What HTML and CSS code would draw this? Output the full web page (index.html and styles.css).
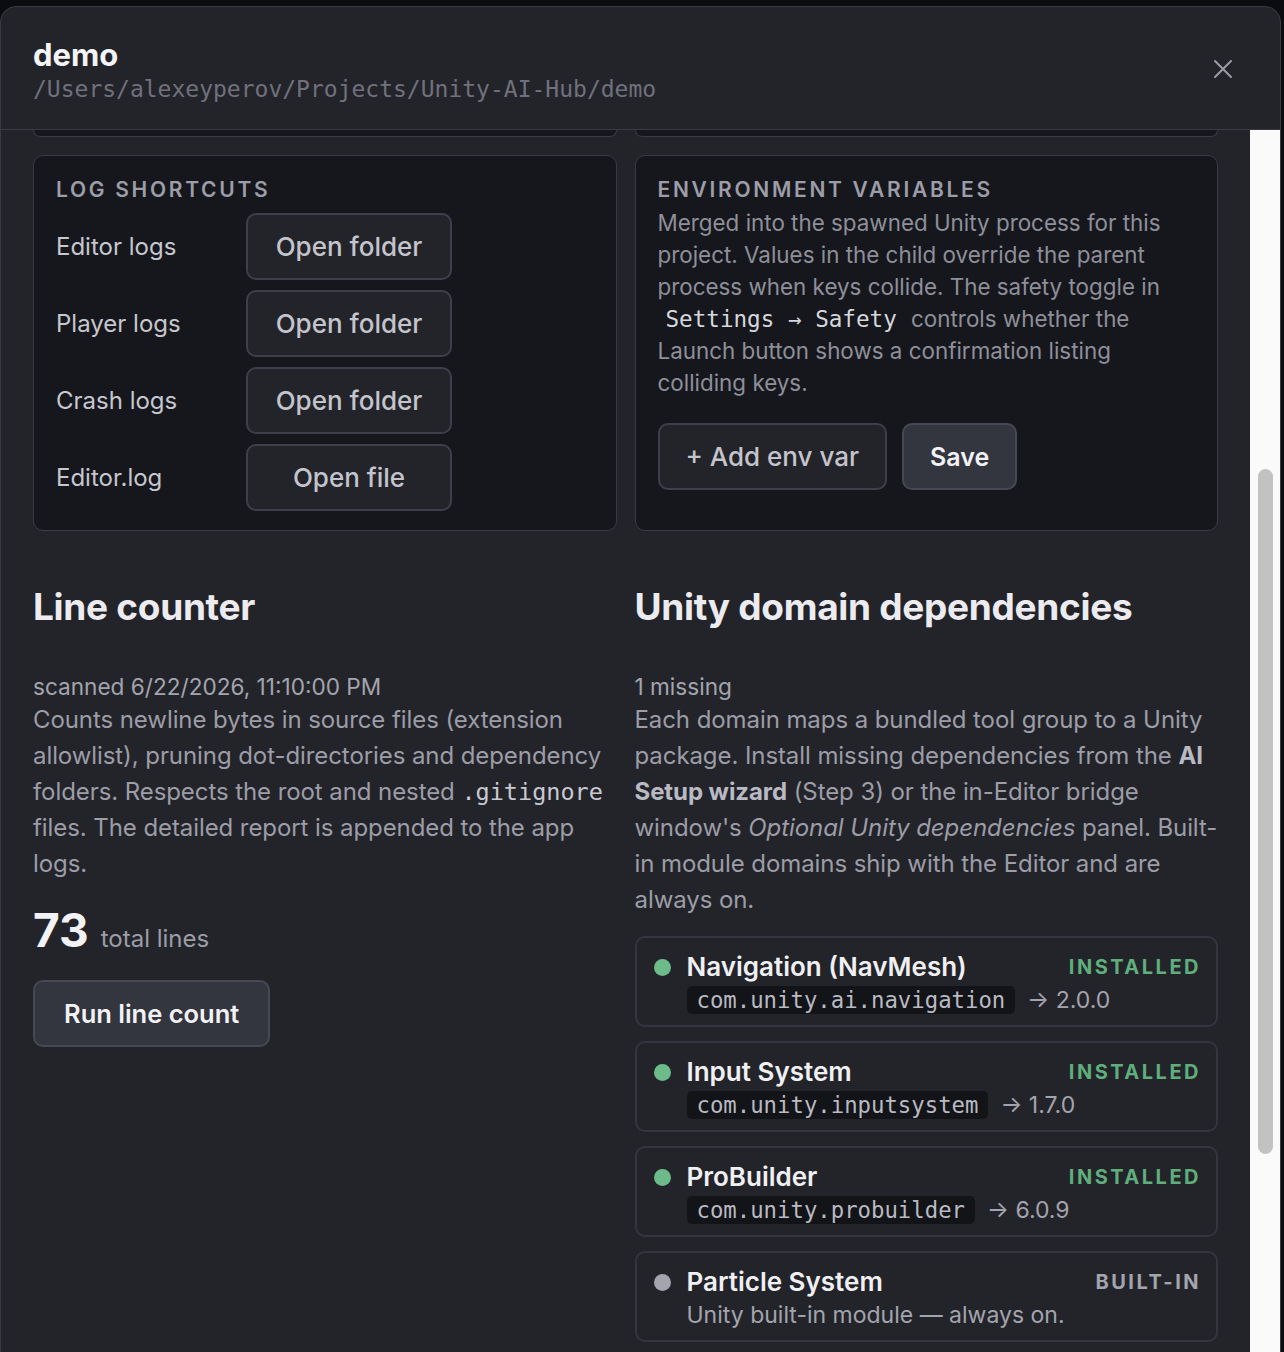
FILE: index.html
```html
<!DOCTYPE html>
<html lang="en">
<head>
    <meta charset="UTF-8">
    <meta name="viewport" content="width=device-width, initial-scale=1.0">
    <title>demo</title>
    <link rel="stylesheet" href="styles.css">
</head>
<body>

<div class="modal">
    <header class="modal-header">
        <div class="title-block">
            <h1>demo</h1>
            <div class="path">/Users/alexeyperov/Projects/Unity-AI-Hub/demo</div>
        </div>
        <button class="close" aria-label="Close">
            <svg width="20" height="20" viewBox="0 0 20 20" fill="none" stroke="currentColor" stroke-width="2" stroke-linecap="round">
                <path d="M2 2 L18 18 M18 2 L2 18"/>
            </svg>
        </button>
    </header>

    <div class="modal-body">
        <div class="content">
            <div class="grid stubs">
                <div class="card stub"></div>
                <div class="card stub"></div>
            </div>

            <div class="grid">
                <div class="card">
                    <div class="card-title">Log shortcuts</div>
                    <div class="log-row">
                        <span class="log-label">Editor logs</span>
                        <button class="btn">Open folder</button>
                    </div>
                    <div class="log-row">
                        <span class="log-label">Player logs</span>
                        <button class="btn">Open folder</button>
                    </div>
                    <div class="log-row">
                        <span class="log-label">Crash logs</span>
                        <button class="btn">Open folder</button>
                    </div>
                    <div class="log-row">
                        <span class="log-label">Editor.log</span>
                        <button class="btn">Open file</button>
                    </div>
                </div>

                <div class="card">
                    <div class="card-title">Environment variables</div>
                    <p class="card-text">Merged into the spawned Unity process for this project. Values in the child override the parent process when keys collide. The safety toggle in <code class="kbd">Settings → Safety</code> controls whether the Launch button shows a confirmation listing colliding keys.</p>
                    <div class="btn-row">
                        <button class="btn btn-sm">+ Add env var</button>
                        <button class="btn btn-sm btn-primary">Save</button>
                    </div>
                </div>
            </div>

            <div class="grid sections">
                <section>
                    <h2>Line counter</h2>
                    <div class="meta">scanned 6/22/2026, 11:10:00 PM</div>
                    <p class="desc">Counts newline bytes in source files (extension allowlist), pruning dot-directories and dependency folders. Respects the root and nested <code>.gitignore</code> files. The detailed report is appended to the app logs.</p>
                    <div class="total"><span class="total-num">73</span><span class="total-label">total lines</span></div>
                    <button class="btn btn-primary btn-run">Run line count</button>
                </section>

                <section>
                    <h2>Unity domain dependencies</h2>
                    <div class="meta">1 missing</div>
                    <p class="desc">Each domain maps a bundled tool group to a Unity package. Install missing dependencies from the <strong>AI Setup wizard</strong> (Step 3) or the in-Editor bridge window's <em>Optional Unity dependencies</em> panel. Built-in module domains ship with the Editor and are always on.</p>

                    <div class="deps">
                        <div class="dep">
                            <div class="dep-head">
                                <span class="dot ok"></span>
                                <span class="dep-name">Navigation (NavMesh)</span>
                                <span class="status ok">Installed</span>
                            </div>
                            <div class="dep-pkg"><code class="chip">com.unity.ai.navigation</code><span class="ver">→ 2.0.0</span></div>
                        </div>
                        <div class="dep">
                            <div class="dep-head">
                                <span class="dot ok"></span>
                                <span class="dep-name">Input System</span>
                                <span class="status ok">Installed</span>
                            </div>
                            <div class="dep-pkg"><code class="chip">com.unity.inputsystem</code><span class="ver">→ 1.7.0</span></div>
                        </div>
                        <div class="dep">
                            <div class="dep-head">
                                <span class="dot ok"></span>
                                <span class="dep-name">ProBuilder</span>
                                <span class="status ok">Installed</span>
                            </div>
                            <div class="dep-pkg"><code class="chip">com.unity.probuilder</code><span class="ver">→ 6.0.9</span></div>
                        </div>
                        <div class="dep">
                            <div class="dep-head">
                                <span class="dot builtin"></span>
                                <span class="dep-name">Particle System</span>
                                <span class="status builtin">Built-in</span>
                            </div>
                            <div class="dep-pkg"><span class="ver">Unity built-in module — always on.</span></div>
                        </div>
                    </div>
                </section>
            </div>
        </div>

        <div class="scrollbar">
            <div class="thumb"></div>
        </div>
    </div>
</div>

</body>
</html>
```

FILE: styles.css
```css
 html, body {
     height: 100%;
 }

 body {
     margin: 0;
     padding: 6px 3px 0 0;
     box-sizing: border-box;
     background-color: #0b0c0f;
     font-family: 'Inter', 'Noto Sans', sans-serif;
     color: #ececf0;
     overflow: hidden;
 }

 .modal {
     height: 1400px;
     display: flex;
     flex-direction: column;
     background-color: #23242a;
     border: 1px solid #3a3b45;
     border-radius: 16px 16px 0 0;
     overflow: hidden;
 }

 .modal-header {
     display: flex;
     justify-content: space-between;
     align-items: center;
     padding: 29px 47px 25px 32px;
     border-bottom: 1px solid #3a3b45;
 }

 .modal-header h1 {
     margin: 0;
     font-size: 31px;
     line-height: 38px;
     font-weight: 700;
     color: #f4f4f6;
 }

 .path {
     font-family: 'DejaVu Sans Mono', monospace;
     font-size: 23px;
     line-height: 30px;
     color: #70717c;
 }

 .close {
     background: none;
     border: none;
     padding: 0;
     color: #9a9ba5;
     cursor: pointer;
     display: flex;
     margin-bottom: 3px;
 }

 .modal-body {
     flex: 1;
     display: flex;
 }

 .content {
     flex: 1;
     padding: 0 32px;
 }

 .scrollbar {
     width: 30px;
     background-color: #fafafa;
     display: flex;
     justify-content: center;
 }

 .thumb {
     width: 15px;
     height: 685px;
     margin-top: 339px;
     border-radius: 8px;
     background-color: #c2c2c2;
 }

 .grid {
     display: grid;
     grid-template-columns: 1fr 1fr;
     gap: 18px;
 }

 .stubs {
     margin-bottom: 18px;
 }

 .card {
     background-color: #16171c;
     border: 1px solid #3a3b45;
     border-radius: 10px;
     padding: 21px 22px 19px;
 }

 .card.stub {
     height: 6px;
     padding: 0;
     border-top: none;
     border-radius: 0 0 10px 10px;
 }

 .card-title {
     font-size: 21px;
     line-height: 26px;
     font-weight: 600;
     letter-spacing: 2.7px;
     text-transform: uppercase;
     color: #9c9da8;
     margin-bottom: 10px;
 }

 .card-title + .card-text {
     margin-top: -6px;
 }

 .log-row {
     display: flex;
     align-items: center;
     margin-bottom: 10px;
 }

 .log-row:last-child {
     margin-bottom: 0;
 }

 .log-label {
     width: 190px;
     font-size: 24px;
     color: #c6c7cf;
 }

 .btn {
     font-family: 'Inter', 'Noto Sans', sans-serif;
     background-color: #23242a;
     color: #c3c4cc;
     border: 2px solid #3e3f4a;
     border-radius: 10px;
     font-size: 26px;
     font-weight: 500;
     height: 67px;
     width: 206px;
     cursor: pointer;
 }

 .btn-sm {
     width: auto;
     height: 67px;
     padding: 0 26px;
     font-size: 26px;
 }

 .btn-primary {
     background-color: #33353f;
     border-color: #474853;
     color: #f2f2f5;
     font-weight: 600;
 }

 .btn-sm.btn-primary {
     font-size: 25px;
 }

 .card-text {
     margin: 0 0 24px;
     font-size: 22.4px;
     line-height: 32px;
     color: #8e8f9a;
 }

 .kbd {
     font-family: 'DejaVu Sans Mono', monospace;
     font-size: 22.6px;
     color: #d6d7de;
     padding: 0 8px;
 }

 .btn-row {
     display: flex;
     gap: 15px;
 }

 .sections {
     margin-top: 53px;
 }

 h2 {
     margin: 0 0 42px;
     font-size: 37px;
     line-height: 46px;
     font-weight: 700;
     color: #ececf0;
     letter-spacing: -0.3px;
 }

 .meta {
     font-size: 22.6px;
     line-height: 30px;
     color: #a3a4ae;
 }

 .desc {
     margin: 0;
     font-size: 24px;
     line-height: 36px;
     letter-spacing: -0.08px;
     color: #9c9da7;
 }

 .desc code {
     font-family: 'DejaVu Sans Mono', monospace;
     font-size: 23.5px;
     letter-spacing: 0;
     color: #c8c9d1;
 }

 .desc strong {
     color: #b9bac3;
 }

 .total {
     display: flex;
     align-items: baseline;
     gap: 12px;
     margin-top: 20px;
 }

 .total-num {
     font-size: 46px;
     font-weight: 700;
     color: #f2f2f5;
 }

 .total-label {
     font-size: 24px;
     color: #9c9da7;
 }

 .btn-run {
     width: auto;
     padding: 0 29px;
     margin-top: 22px;
     font-size: 25.5px;
 }

 .deps {
     display: flex;
     flex-direction: column;
     gap: 14px;
     margin-top: 18px;
 }

 .dep {
     border: 2px solid #34353f;
     border-radius: 10px;
     padding: 13px 17px 11px;
 }

 .dep-head {
     display: flex;
     align-items: center;
 }

 .dot {
     width: 17px;
     height: 17px;
     border-radius: 50%;
     margin-right: 16px;
 }

 .dot.ok {
     background-color: #6dbb8a;
 }

 .dot.builtin {
     background-color: #a3a4ae;
 }

 .dep-name {
     flex: 1;
     font-size: 26px;
     line-height: 32px;
     font-weight: 600;
     color: #f0f0f3;
 }

 .status {
     font-size: 20px;
     font-weight: 700;
     letter-spacing: 2.5px;
     margin-right: -2px;
     text-transform: uppercase;
 }

 .status.ok {
     color: #5fae7c;
 }

 .status.builtin {
     color: #a3a4ae;
 }

 .dep-pkg {
     display: flex;
     align-items: center;
     gap: 12px;
     padding-left: 33px;
     margin-top: 3px;
 }

 .chip {
     font-family: 'DejaVu Sans Mono', monospace;
     font-size: 22.3px;
     line-height: 28px;
     padding: 0 10px;
     background-color: #131418;
     border-radius: 5px;
     color: #b9bac3;
 }

 .ver {
     font-size: 23px;
     color: #a3a4ae;
 }
```
